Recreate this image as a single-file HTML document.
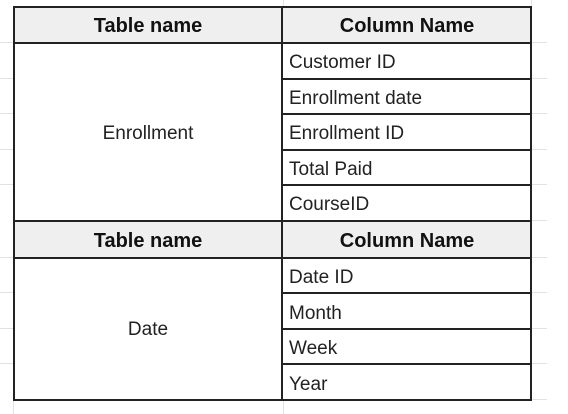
<!DOCTYPE html>
<html><head><style>
body{margin:0;width:568px;height:414px;background:#fff;position:relative;overflow:hidden;font-family:"Liberation Sans",Arial,sans-serif;color:#222}
.l{position:absolute;background:#222}
.g{position:absolute;background:#e2e2e2}
.t{position:absolute;font-size:19px;line-height:20px;white-space:nowrap}
.h{font-weight:bold;font-size:20px;color:#111}
.hd{position:absolute;background:#efefef}
</style></head><body>
<div class="g" style="left:531px;top:42px;width:16px;height:1px"></div>
<div class="g" style="left:531px;top:78px;width:16px;height:1px"></div>
<div class="g" style="left:531px;top:113px;width:16px;height:1px"></div>
<div class="g" style="left:531px;top:149px;width:16px;height:1px"></div>
<div class="g" style="left:531px;top:184px;width:16px;height:1px"></div>
<div class="g" style="left:531px;top:220px;width:16px;height:1px"></div>
<div class="g" style="left:531px;top:257px;width:16px;height:1px"></div>
<div class="g" style="left:531px;top:292px;width:16px;height:1px"></div>
<div class="g" style="left:531px;top:328px;width:16px;height:1px"></div>
<div class="g" style="left:531px;top:363px;width:16px;height:1px"></div>
<div class="g" style="left:531px;top:399px;width:16px;height:1px"></div>
<div class="g" style="left:0;top:42px;width:13px;height:1px"></div>
<div class="g" style="left:0;top:78px;width:13px;height:1px"></div>
<div class="g" style="left:0;top:113px;width:13px;height:1px"></div>
<div class="g" style="left:0;top:149px;width:13px;height:1px"></div>
<div class="g" style="left:0;top:184px;width:13px;height:1px"></div>
<div class="g" style="left:0;top:257px;width:13px;height:1px"></div>
<div class="g" style="left:0;top:292px;width:13px;height:1px"></div>
<div class="g" style="left:0;top:328px;width:13px;height:1px"></div>
<div class="g" style="left:0;top:363px;width:13px;height:1px"></div>
<div class="g" style="left:283px;top:400px;width:1px;height:14px"></div>
<div class="g" style="left:13px;top:400px;width:1px;height:14px"></div>
<div class="g" style="left:531px;top:0;width:1px;height:6px"></div>
<div class="g" style="left:283px;top:0;width:1px;height:6px"></div>

<div class="hd" style="left:14px;top:7px;width:517px;height:36px"></div>
<div class="hd" style="left:14px;top:222px;width:517px;height:36px"></div>

<div class="l" style="left:13px;top:6px;width:519px;height:2px"></div>
<div class="l" style="left:13px;top:42px;width:519px;height:2px"></div>
<div class="l" style="left:282px;top:78px;width:250px;height:2px"></div>
<div class="l" style="left:282px;top:113px;width:250px;height:2px"></div>
<div class="l" style="left:282px;top:149px;width:250px;height:2px"></div>
<div class="l" style="left:282px;top:184px;width:250px;height:2px"></div>
<div class="l" style="left:13px;top:220px;width:519px;height:2px"></div>
<div class="l" style="left:13px;top:257px;width:519px;height:2px"></div>
<div class="l" style="left:282px;top:292px;width:250px;height:2px"></div>
<div class="l" style="left:282px;top:328px;width:250px;height:2px"></div>
<div class="l" style="left:282px;top:363px;width:250px;height:2px"></div>
<div class="l" style="left:13px;top:399px;width:519px;height:2px"></div>
<div class="l" style="left:13px;top:6px;width:2px;height:395px"></div>
<div class="l" style="left:281px;top:6px;width:2px;height:395px"></div>
<div class="l" style="left:530px;top:6px;width:2px;height:395px"></div>

<div class="t h" style="left:14px;width:268px;text-align:center;top:16px">Table name</div>
<div class="t h" style="left:283px;width:248px;text-align:center;top:16px">Column Name</div>
<div class="t h" style="left:14px;width:268px;text-align:center;top:231px">Table name</div>
<div class="t h" style="left:283px;width:248px;text-align:center;top:231px">Column Name</div>
<div class="t" style="left:14px;width:268px;text-align:center;top:124px">Enrollment</div>
<div class="t" style="left:14px;width:268px;text-align:center;top:320px">Date</div>
<div class="t" style="left:289px;top:53px">Customer ID</div>
<div class="t" style="left:289px;top:89px">Enrollment date</div>
<div class="t" style="left:289px;top:124px">Enrollment ID</div>
<div class="t" style="left:289px;top:160px">Total Paid</div>
<div class="t" style="left:289px;top:195px">CourseID</div>
<div class="t" style="left:289px;top:268px">Date ID</div>
<div class="t" style="left:289px;top:304px">Month</div>
<div class="t" style="left:289px;top:339px">Week</div>
<div class="t" style="left:289px;top:375px">Year</div>
</body></html>
